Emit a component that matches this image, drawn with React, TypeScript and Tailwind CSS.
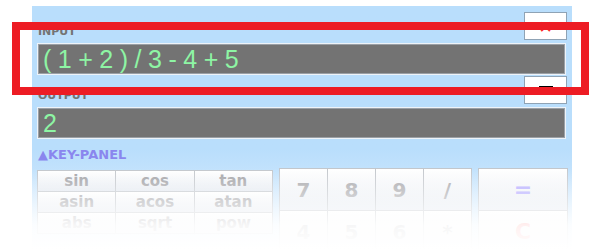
import React from 'react';

const funcKeys = ['sin', 'cos', 'tan', 'asin', 'acos', 'atan', 'abs', 'sqrt', 'pow'];
const digitRows = [
  ['7', '8', '9', '/'],
  ['4', '5', '6', '*'],
];

function Display({ value }: { value: string }) {
  return (
    <div className="ml-[5px] w-[529px] border border-[#eef3f8]">
      <div className="h-[30px] border border-[#9aa0a6] bg-[#737373] pl-[4px] flex items-center">
        <span className="text-[25px] leading-none text-[#8ef5a4] tracking-[6.5px] font-['Liberation_Sans',sans-serif]">
          {value}
        </span>
      </div>
    </div>
  );
}

function FieldHeader({ label, children }: { label: string; children: React.ReactNode }) {
  return (
    <div className="flex items-start justify-between h-[28px] pl-[6px] pr-[5px]">
      <span className="mt-[14px] text-[11px] font-bold text-[#737373] leading-none font-['DejaVu_Sans',sans-serif]">
        {label}
      </span>
      <button className="w-[43px] h-[28px] bg-white border border-[#8fa3b5] flex items-start justify-center">
        {children}
      </button>
    </div>
  );
}

export default function App() {
  return (
    <div className="relative w-[600px] h-[250px] bg-white overflow-hidden">
      <div className="ml-[32px] mt-[6px] w-[540px] h-[260px] pt-[6px] bg-gradient-to-b from-[#b9defc] from-55% to-[#eaf4fd]">
        <FieldHeader label="INPUT">
          <span className="mt-[6px] text-[#ff2a2a] text-[17px] leading-none font-['DejaVu_Sans',sans-serif]">✕</span>
        </FieldHeader>
        <div className="mt-[3px]">
          <Display value="(1+2)/3-4+5" />
        </div>

        <div className="mt-[1px]">
          <FieldHeader label="OUTPUT">
            <span className="mt-[9px] block w-[14px] h-[3px] bg-black" />
          </FieldHeader>
        </div>
        <div className="mt-[3px]">
          <Display value="2" />
        </div>

        <div className="mt-[9px] ml-[6px] text-[13px] font-bold text-[#8a86ee] leading-none font-['DejaVu_Sans',sans-serif]">
          ▲KEY-PANEL
        </div>

        <div className="flex items-start mt-[7px] ml-[5px]">
          <div className="grid grid-cols-3 w-[236px] mt-[2px] border-l border-t border-[#c3c7cc]">
            {funcKeys.map((k) => (
              <div
                key={k}
                className="h-[21px] flex items-center justify-center border-r border-b border-[#c3c7cc] bg-gradient-to-b from-white to-[#e4e9f0] text-[15px] font-bold text-[#a4a4a8] leading-none font-['DejaVu_Sans',sans-serif]"
              >
                {k}
              </div>
            ))}
          </div>

          <div className="ml-[6px] flex flex-col border-l border-t border-[#c3c7cc]">
            {digitRows.map((row, i) => (
              <div key={i} className="flex">
                {row.map((d) => (
                  <div
                    key={d}
                    className="w-[48px] h-[42px] flex items-center justify-center border-r border-b border-[#c3c7cc] bg-gradient-to-b from-white to-[#e4e9f0] text-[20px] font-bold text-[#a8a8ac] leading-none font-['DejaVu_Sans',sans-serif]"
                  >
                    {d}
                  </div>
                ))}
              </div>
            ))}
          </div>

          <div className="ml-[6px] flex flex-col border-l border-t border-[#c3c7cc]">
            <div className="w-[89px] h-[42px] flex items-center justify-center border-r border-b border-[#c3c7cc] bg-gradient-to-b from-white to-[#e4e9f0] text-[22px] font-bold text-[#b3aaff] leading-none font-['DejaVu_Sans',sans-serif]">
              =
            </div>
            <div className="w-[89px] h-[42px] flex items-center justify-center border-r border-b border-[#c3c7cc] bg-gradient-to-b from-white to-[#e4e9f0] text-[22px] font-bold text-[#ff6b6b] leading-none font-['DejaVu_Sans',sans-serif]">
              C
            </div>
          </div>
        </div>
      </div>

      {/* fade-out over the bottom of the panel */}
      <div className="absolute left-0 right-0 top-[168px] h-[82px] bg-gradient-to-b from-transparent via-white/90 via-70% to-white pointer-events-none" />

      {/* red annotation frame */}
      <div className="absolute left-[12px] top-[22px] w-[577px] h-[73px] border-[8px] border-[#ed1c24] pointer-events-none" />
    </div>
  );
}
